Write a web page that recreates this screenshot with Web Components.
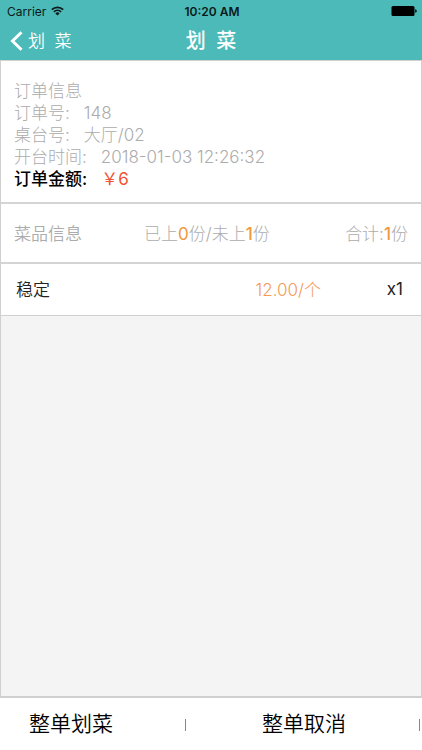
<!DOCTYPE html>
<html lang="zh-CN">
<head>
<meta charset="utf-8">
<meta name="viewport" content="width=device-width, initial-scale=1">
<title>划菜</title>
<style>
  html, body { margin: 0; height: 100%; }
  body { font-family: Inter, "Noto Sans CJK SC", sans-serif; font-size: 17px; background: #fff; }
</style>
</head>
<body>
<order-page></order-page>
<script>
const define = (name, html) => {
  const template = document.createElement('template');
  template.innerHTML = html;
  customElements.define(name, class extends HTMLElement {
    constructor() {
      super();
      this.attachShadow({ mode: 'open' }).append(template.content.cloneNode(true));
    }
  });
};

define('status-bar', `
<style>
  :host { display: grid; grid-template-columns: 1fr auto 1fr; align-items: center; height: 22px; padding: 0 5px 0 7px; font-size: 12px; color: #0b1a1a; }
  .left { display: flex; align-items: center; gap: 5px; }
  .time { font-weight: 600; }
  .battery { justify-self: end; }
  svg { display: block; }
</style>
<span class="left"><span>Carrier</span>
  <svg width="13" height="10" viewBox="0 0 13 10" fill="none" stroke="currentColor" stroke-width="1.7"><path d="M.8 3.6a8.2 8.2 0 0 1 11.4 0M2.9 5.8a5.2 5.2 0 0 1 7.2 0"/><path d="M6.5 9.6 4.4 7.4a3 3 0 0 1 4.2 0z" fill="currentColor" stroke="none"/></svg>
</span>
<span class="time">10:20 AM</span>
<svg class="battery" width="26" height="10" viewBox="0 0 26 10" fill="#000"><rect x=".5" width="23" height="10" rx="1.5"/><path d="M24.2 3.2c1.1.2 1.5.9 1.5 1.8s-.4 1.6-1.5 1.8z"/></svg>
`);

define('nav-bar', `
<style>
  :host { display: grid; grid-template-columns: 1fr auto 1fr; align-items: center; height: 38px; padding: 0 10px; color: #fff; }
  button { display: flex; align-items: center; gap: 5px; justify-self: start; padding: 0; border: 0; background: none; color: inherit; font: inherit; font-weight: 350; line-height: 24px; white-space: pre; }
  h1 { margin: 0; font-size: 20px; line-height: 28px; font-weight: 500; white-space: pre; }
  svg { display: block; }
</style>
<button type="button"><svg width="13" height="20" viewBox="0 0 13 20" fill="none" stroke="currentColor" stroke-width="3"><path d="M11.5 1.2 2.5 10l9 8.8"/></svg><slot name="back"></slot></button>
<h1><slot></slot></h1>
`);

define('info-line', `
<style>
  :host { display: flex; gap: 14px; line-height: 22px; color: #acacac; font-weight: 300; }
  :host([total]) { color: #000; }
  :host([total]) .label { font-weight: 500; }
  :host([total]) .value { color: #ee5535; font-weight: 400; }
</style>
<span class="label"><slot name="label"></slot></span><span class="value"><slot></slot></span>
`);

define('dish-summary', `
<style>
  :host { display: grid; grid-template-columns: 130px 1fr auto; align-items: center; height: 56px; padding: 0 13px 2px 13px; color: #acacac; font-weight: 300; }
  .name { font-weight: 350; }
  ::slotted(*) { white-space: nowrap; }
</style>
<span class="name"><slot name="title"></slot></span><slot name="progress"></slot><slot name="total"></slot>
`);

define('dish-row', `
<style>
  :host { display: grid; grid-template-columns: 1fr auto 82px; align-items: center; height: 49px; padding: 0 18px 2px 15px; color: #222; border-bottom: 1px solid #d0d0d0; background: #fff; font-weight: 350; }
  .price { color: #f39a58; font-weight: 300; }
  .count { text-align: right; font-weight: 400; }
</style>
<span><slot></slot></span><span class="price"><slot name="price"></slot></span><span class="count"><slot name="count"></slot></span>
`);

define('action-item', `
<style>
  :host { display: flex; align-items: center; justify-content: flex-end; }
  button { flex: 1; text-align: left; padding: 0 0 0 29px; border: 0; background: none; color: #000; font: inherit; font-size: 21px; font-weight: 350; line-height: 52px; }
  :host(:last-child) button { padding-left: 75px; }
  i { width: 1px; height: 12px; margin: 2px 2px 0 0; background: #888; }
  :host(:first-child) i { margin-right: 1px; }
</style>
<button type="button"><slot></slot></button><i></i>
`);

define('order-page', `
<style>
  :host { display: flex; flex-direction: column; min-height: 100vh; }
  header { background: #4cbab8; }
  main { flex: 1; display: flex; flex-direction: column; border: 1px solid #d0d0d0; border-bottom-width: 2px; background: #f4f4f4; }
  section { background: #fff; border-bottom: 2px solid #d4d4d4; }
  .info { padding: 19px 13px 12px; }
  b { font-weight: 400; color: #f0973c; }
  b.strong { font-weight: 500; }
  footer { display: grid; grid-template-columns: 187fr 235fr; height: 52px; background: #fff; }
</style>
<header>
  <status-bar></status-bar>
  <nav-bar><span slot="back">划&nbsp; 菜</span>划&nbsp; 菜</nav-bar>
</header>
<main>
  <section class="info">
    <info-line><span slot="label">订单信息</span></info-line>
    <info-line><span slot="label">订单号:</span>148</info-line>
    <info-line><span slot="label">桌台号:</span>大厅/02</info-line>
    <info-line><span slot="label">开台时间:</span>2018-01-03 12:26:32</info-line>
    <info-line total><span slot="label">订单金额:</span>￥6</info-line>
  </section>
  <section>
    <dish-summary>
      <span slot="title">菜品信息</span>
      <span slot="progress">已上<b>0</b>份/未上<b class="strong">1</b>份</span>
      <span slot="total">合计:<b class="strong">1</b>份</span>
    </dish-summary>
  </section>
  <dish-row>稳定<span slot="price">12.00/个</span><span slot="count">x1</span></dish-row>
</main>
<footer>
  <action-item>整单划菜</action-item>
  <action-item>整单取消</action-item>
</footer>
`);
</script>
</body>
</html>
